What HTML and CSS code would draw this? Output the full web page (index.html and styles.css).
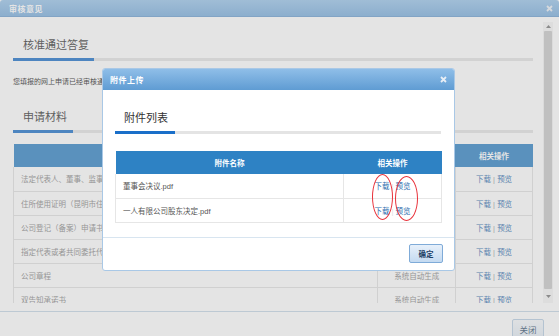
FILE: index.html
```html
<!DOCTYPE html>
<html>
<head>
  <title>审核意见</title>
  <meta charset="UTF-8">
  <link rel="stylesheet" href="styles.css">
</head>
<body>
  <div class="win">
    <div class="win-head">
      <span class="win-title">审核意见</span>
      <svg class="x-icon" width="7" height="7" viewBox="0 0 7 7"><path d="M1 1L6 6M6 1L1 6"/></svg>
    </div>
    <div class="win-main">
      <div class="scroll">
        <div class="sec">
          <div class="tab-title">核准通过答复</div>
          <div class="tab-line"><span class="tab-on wide"></span></div>
          <p class="notice">您填报的网上申请已经审核通过，请携带以下材料原件到登记窗口办理相关手续。</p>
          <div class="tab-title t2">申请材料</div>
          <div class="tab-line"><span class="tab-on"></span></div>
          <table class="grid">
            <colgroup><col style="width:365px"><col style="width:78px"><col style="width:77px"></colgroup>
            <thead>
              <tr><th>材料名称</th><th>材料来源</th><th>相关操作</th></tr>
            </thead>
            <tbody>
              <tr><td class="name">法定代表人、董事、监事和经理的任职文件及身份证明</td><td>申请人上传</td><td class="ops"><a>下载</a> | <a>预览</a></td></tr>
              <tr><td class="name">住所使用证明（昆明市住所登记承诺书）</td><td>申请人上传</td><td class="ops"><a>下载</a> | <a>预览</a></td></tr>
              <tr><td class="name">公司登记（备案）申请书</td><td>系统自动生成</td><td class="ops"><a>下载</a> | <a>预览</a></td></tr>
              <tr><td class="name">指定代表或者共同委托代理人授权委托书</td><td>系统自动生成</td><td class="ops"><a>下载</a> | <a>预览</a></td></tr>
              <tr><td class="name">公司章程</td><td>系统自动生成</td><td class="ops"><a>下载</a> | <a>预览</a></td></tr>
              <tr><td class="name">双告知承诺书</td><td>系统自动生成</td><td class="ops"><a>下载</a> | <a>预览</a></td></tr>
            </tbody>
          </table>
        </div>
      </div>
      <div class="vbar">
        <div class="vbar-btn"><svg width="5" height="3" viewBox="0 0 5 3"><path d="M0 3L2.5 0L5 3Z"/></svg></div>
        <div class="vbar-thumb"></div>
        <div class="vbar-btn down"><svg width="5" height="3" viewBox="0 0 5 3"><path d="M0 0L5 0L2.5 3Z"/></svg></div>
      </div>
    </div>
    <div class="win-foot">
      <button class="btn">关闭</button>
    </div>
    <div class="mask"></div>
  </div>

  <div class="dlg">
    <div class="dlg-head">
      <span class="win-title">附件上传</span>
      <svg class="x-icon" width="7" height="7" viewBox="0 0 7 7"><path d="M1 1L6 6M6 1L1 6"/></svg>
    </div>
    <div class="dlg-body">
      <div class="tab-title">附件列表</div>
      <div class="tab-line"><span class="tab-on"></span></div>
      <table class="grid files">
        <colgroup><col style="width:228px"><col style="width:98px"></colgroup>
        <thead>
          <tr><th>附件名称</th><th>相关操作</th></tr>
        </thead>
        <tbody>
          <tr><td class="name">董事会决议.pdf</td><td class="ops"><a>下载</a> <span class="sep">|</span> <a>预览</a></td></tr>
          <tr><td class="name">一人有限公司股东决定.pdf</td><td class="ops"><a>下载</a> <span class="sep">|</span> <a>预览</a></td></tr>
        </tbody>
      </table>
    </div>
    <div class="dlg-foot">
      <button class="btn ok">确定</button>
    </div>
    <!-- 标注圈 -->
    <span class="mark m1"></span>
    <span class="mark m2"></span>
  </div>
</body>
</html>
```

FILE: styles.css
```css
body {
  margin: 0;
  width: 559px;
  height: 336px;
  overflow: hidden;
  font-family: "Liberation Sans", "Noto Sans CJK SC", sans-serif;
  background-color: #fff;
  color: #333;
  position: relative;
}
.win {
  position: relative;
  height: 336px;
  display: flex;
  flex-direction: column;
  background-color: #fff;
}
.win-head {
  height: 17px;
  flex: none;
  display: flex;
  align-items: center;
  justify-content: space-between;
  padding: 0 6px 0 9px;
  border-radius: 3px 3px 0 0;
  background: linear-gradient(#98c4ea, #7aaedd);
  border-bottom: 1px solid #6b9fd0;
  box-sizing: border-box;
}
.win-title {
  color: #fff;
  font-size: 8px;
  font-weight: bold;
  letter-spacing: 0.5px;
}
.x-icon path {
  stroke: #e8eef5;
  stroke-width: 1.8;
}
.win-main {
  flex: 1;
  display: flex;
  padding: 5px 6px 8px 0;
  border-bottom: 1px solid #c4d6e6;
  min-height: 0;
}
.scroll {
  flex: 1;
  overflow: hidden;
}
.sec {
  margin-left: 13px;
  width: 520px;
}
.tab-title {
  font-size: 11px;
  line-height: 20px;
  padding-left: 10px;
  margin-top: 13px;
  color: #333;
}
.tab-title.t2 {
  margin-top: 19px;
}
.tab-line {
  margin-top: 3px;
  height: 3px;
  background-color: #e4e4e4;
}
.tab-on {
  display: block;
  width: 60px;
  height: 3px;
  background-color: #1a6fc9;
}
.tab-on.wide {
  width: 81px;
}
.notice {
  margin: 15px 0 0 0;
  font-size: 7px;
  line-height: 12px;
  white-space: nowrap;
  color: #222;
}
.grid {
  margin-top: 11px;
  border-collapse: collapse;
  table-layout: fixed;
  font-size: 7.5px;
}
.grid th {
  height: 23px;
  padding: 0;
  background-color: #2e82c4;
  color: #fff;
  font-weight: bold;
  text-align: center;
}
.grid td {
  height: 24px;
  padding: 0;
  box-sizing: border-box;
  border: 1px solid #e1e1e1;
  border-top: none;
  color: #888;
  text-align: center;
  white-space: nowrap;
  overflow: hidden;
}
.grid td.name {
  text-align: left;
  padding-left: 7px;
}
.grid td.ops {
  color: #999;
}
.grid a {
  color: #2c6cae;
}
.vbar {
  width: 10px;
  flex: none;
  display: flex;
  flex-direction: column;
  background-color: #f1f1f1;
}
.vbar-btn {
  height: 9px;
  display: flex;
  align-items: center;
  justify-content: center;
  background-color: #f4f4f4;
}
.vbar-btn.down {
  height: 14px;
}
.vbar-btn path {
  fill: #777;
}
.vbar-thumb {
  flex: 1;
  margin: 0 1px;
  background-color: #c8c8c8;
  border-radius: 1px;
}
.win-foot {
  height: 24px;
  flex: none;
  display: flex;
  justify-content: flex-end;
  align-items: flex-start;
  padding: 7px 15px 0 0;
  box-sizing: border-box;
}
.btn {
  font-family: "Liberation Sans", "Noto Sans CJK SC", sans-serif;
  font-size: 8.5px;
  color: #34506e;
  width: 32px;
  height: 19px;
  padding: 0;
  border: 1px solid #b7cde2;
  border-radius: 2px;
  background: linear-gradient(#f6f9fc, #e2ebf4);
}
.mask {
  position: absolute;
  inset: 0;
  background-color: rgba(176, 176, 176, 0.34);
}

.dlg {
  position: absolute;
  left: 102px;
  top: 68px;
  width: 353px;
  height: 203px;
  box-sizing: border-box;
  border: 1px solid #a9c8e6;
  border-radius: 3px;
  background-color: #fff;
  display: flex;
  flex-direction: column;
}
.dlg-head {
  height: 21px;
  flex: none;
  display: flex;
  align-items: center;
  justify-content: space-between;
  padding: 0 7px 0 7px;
  background: linear-gradient(#8fbee8, #5f9cd3);
  border-radius: 2px 2px 0 0;
}
.dlg-body {
  flex: 1;
  padding: 0 13px 0 12px;
}
.dlg-body .tab-title {
  margin-top: 18px;
  padding-left: 9px;
}
.grid.files {
  margin-top: 17px;
  width: 326px;
}
.grid.files td {
  border-color: #e6e6e6;
}
.grid.files td.name {
  color: #555;
}
.grid.files .sep {
  color: #ddd;
}
.dlg-foot {
  height: 33px;
  flex: none;
  border-top: 1px solid #d8e5f0;
  display: flex;
  justify-content: flex-end;
  align-items: flex-start;
  padding: 6px 11px 0 0;
  box-sizing: border-box;
}
.btn.ok {
  width: 34px;
  height: 19px;
  font-size: 7.5px;
  font-weight: bold;
  color: #1d3f66;
  border-color: #7fabd8;
  background: linear-gradient(#e7f0fa, #c4daf1);
}
.mark {
  position: absolute;
  border: 1.5px solid #e8313a;
  border-radius: 50%;
}
.m1 {
  left: 269px;
  top: 105px;
  width: 19px;
  height: 44px;
}
.m2 {
  left: 292px;
  top: 107px;
  width: 21px;
  height: 43px;
}
```
